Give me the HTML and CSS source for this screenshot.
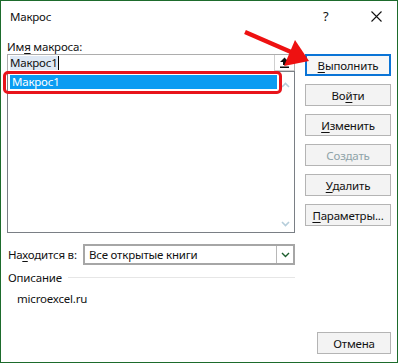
FILE: index.html
```html
<!DOCTYPE html>
<html lang="ru">
<head>
<meta charset="utf-8">
<title>Макрос</title>
<link rel="stylesheet" href="styles.css">
</head>
<body>
<div class="window">
  <div class="titlebar">
    <span class="title">Макрос</span>
    <span class="help">?</span>
    <svg class="close" width="11" height="11" viewBox="0 0 11 11"><path d="M0.5 0.5 L10.5 10.5 M10.5 0.5 L0.5 10.5" stroke="#111" stroke-width="1.1" fill="none"/></svg>
  </div>
  <div class="content">
    <div class="left">
      <div class="label">Им<u>я</u> макроса:</div>
      <div class="input">
        <span class="input-text">Макрос1</span><span class="caret"></span>
        <span class="upbtn"><svg width="11" height="11" viewBox="0 0 11 11"><path d="M5.5 0.5 L10 5 L7 5 L7 8 L4 8 L4 5 L1 5 Z" fill="#111"/><rect x="1" y="9.5" width="9" height="1.5" fill="#111"/></svg></span>
      </div>
      <div class="list">
        <div class="items">
          <div class="item selected">Макрос1</div>
        </div>
        <div class="scroll">
          <svg width="9" height="6" viewBox="0 0 9 6"><path d="M1 5 L4.5 1.5 L8 5" stroke="#b5cdda" stroke-width="1.6" fill="none"/></svg>
          <svg width="9" height="6" viewBox="0 0 9 6"><path d="M1 1 L4.5 4.5 L8 1" stroke="#b5cdda" stroke-width="1.6" fill="none"/></svg>
        </div>
      </div>
      <div class="location">
        <span class="loc-label">На<u>х</u>одится в:</span>
        <div class="select">
          <span class="select-text">Все открытые книги</span>
          <span class="select-btn"><svg width="9" height="6" viewBox="0 0 9 6"><path d="M1 1 L4.5 4.5 L8 1" stroke="#1c5e2e" stroke-width="1.4" fill="none"/></svg></span>
        </div>
      </div>
      <div class="group">
        <span class="group-title">Описание</span>
        <span class="group-line"></span>
      </div>
      <div class="desc">microexcel.ru</div>
    </div>
    <div class="right">
      <div class="btn primary"><span><u>В</u>ыполнить</span></div>
      <div class="btn">Во<u>й</u>ти</div>
      <div class="btn"><u>И</u>зменить</div>
      <div class="btn disabled">Создать</div>
      <div class="btn"><u>У</u>далить</div>
      <div class="btn"><u>П</u>араметры...</div>
    </div>
  </div>
  <div class="footer">
    <div class="btn cancel">Отмена</div>
  </div>
  <div class="highlight"></div>
  <svg class="arrow" width="399" height="363" viewBox="0 0 399 363">
    <path d="M245 32 L291 52" stroke="#ee1111" stroke-width="4.5" fill="none"/>
    <path d="M295 40 L284 66 L309 61 Z" fill="#ee1111"/>
  </svg>
</div>
</body>
</html>
```

FILE: styles.css
```css
html, body {
  margin: 0;
  padding: 0;
  background: #fff;
}
body {
  font-family: "Noto Sans", "Open Sans", sans-serif;
  font-size: 11.5px;
  letter-spacing: -0.2px;
  color: #111;
}
u {
  text-decoration: underline;
  text-underline-offset: 2px;
}
.window {
  position: relative;
  width: 398px;
  height: 363px;
  box-sizing: border-box;
  border: 1px solid #1d6b2c;
  background: #fff;
  display: flex;
  flex-direction: column;
  overflow: hidden;
}
.titlebar {
  height: 30px;
  display: flex;
  align-items: center;
  padding-left: 9px;
  flex: none;
}
.title {
  flex: 1;
  line-height: 15px;
}
.help {
  width: 10px;
  margin-right: 38px;
  font-size: 13px;
  line-height: 15px;
}
.close {
  margin-right: 15px;
}
.content {
  display: flex;
  gap: 10px;
  padding: 0 6px;
}
.left {
  width: 288px;
  display: flex;
  flex-direction: column;
}
.label {
  margin-top: 8px;
  line-height: 15px;
  height: 15px;
}
.input {
  height: 17px;
  box-sizing: border-box;
  border: 1px solid #adadad;
  border-bottom: none;
  display: flex;
  align-items: center;
  padding-left: 2px;
}
.input-text {
  line-height: 14px;
  background: #dfe9f5;
}
.caret {
  width: 1px;
  height: 14px;
  background: #000;
}
.upbtn {
  margin-left: auto;
  width: 20px;
  height: 16px;
  box-sizing: border-box;
  border-left: 1px solid #cfcfcf;
  border-bottom: 1px solid #cfcfcf;
  display: flex;
  align-items: center;
  justify-content: center;
  background: #fff;
}
.list {
  height: 162px;
  box-sizing: border-box;
  border: 1px solid #7a7f85;
  display: flex;
}
.items {
  flex: 1;
  padding: 3px 0 0 2px;
}
.item {
  height: 14px;
  line-height: 14px;
  padding-left: 2px;
}
.item.selected {
  background: #0b9cf2;
  color: #fff;
}
.scroll {
  width: 17px;
  display: flex;
  flex-direction: column;
  justify-content: space-between;
  align-items: center;
  padding: 10px 0 5px;
}
.location {
  margin-top: 11px;
  display: flex;
  align-items: center;
  height: 21px;
}
.loc-label {
  width: 75px;
  padding-left: 1px;
}
.select {
  flex: 1;
  height: 21px;
  box-sizing: border-box;
  border: 2px solid #a6a6a6;
  display: flex;
  align-items: center;
}
.select-text {
  flex: 1;
  padding-left: 4px;
}
.select-btn {
  width: 16px;
  height: 17px;
  border-left: 1px solid #b8b8b8;
  display: flex;
  align-items: center;
  justify-content: center;
}
.group {
  margin-top: 5px;
  display: flex;
  align-items: center;
  height: 15px;
}
.group-title {
  padding-left: 1px;
  padding-right: 6px;
}
.group-line {
  flex: 1;
  height: 1px;
  background: #e6e6e6;
}
.desc {
  margin-top: 6px;
  padding-left: 10px;
  line-height: 15px;
}
.right {
  width: 86px;
  padding-top: 23px;
  display: flex;
  flex-direction: column;
  gap: 8px;
}
.btn {
  height: 22px;
  box-sizing: border-box;
  border: 1px solid #b4b4b4;
  background: #f3f3f3;
  display: flex;
  align-items: center;
  justify-content: center;
  line-height: 15px;
}
.btn.primary {
  border: 2px solid #0a74d6;
  background: #f7f7f7;
}
.btn.disabled {
  color: #8fa3a8;
}
.footer {
  margin-top: auto;
  display: flex;
  justify-content: flex-end;
  padding: 0 6px 8px 0;
}
.btn.cancel {
  width: 74px;
}
.highlight {
  position: absolute;
  left: 2px;
  top: 70px;
  width: 279px;
  height: 23px;
  box-sizing: border-box;
  border: 3px solid #e8141b;
  border-radius: 5px;
}
.arrow {
  position: absolute;
  left: -1px;
  top: -1px;
  pointer-events: none;
}
```
